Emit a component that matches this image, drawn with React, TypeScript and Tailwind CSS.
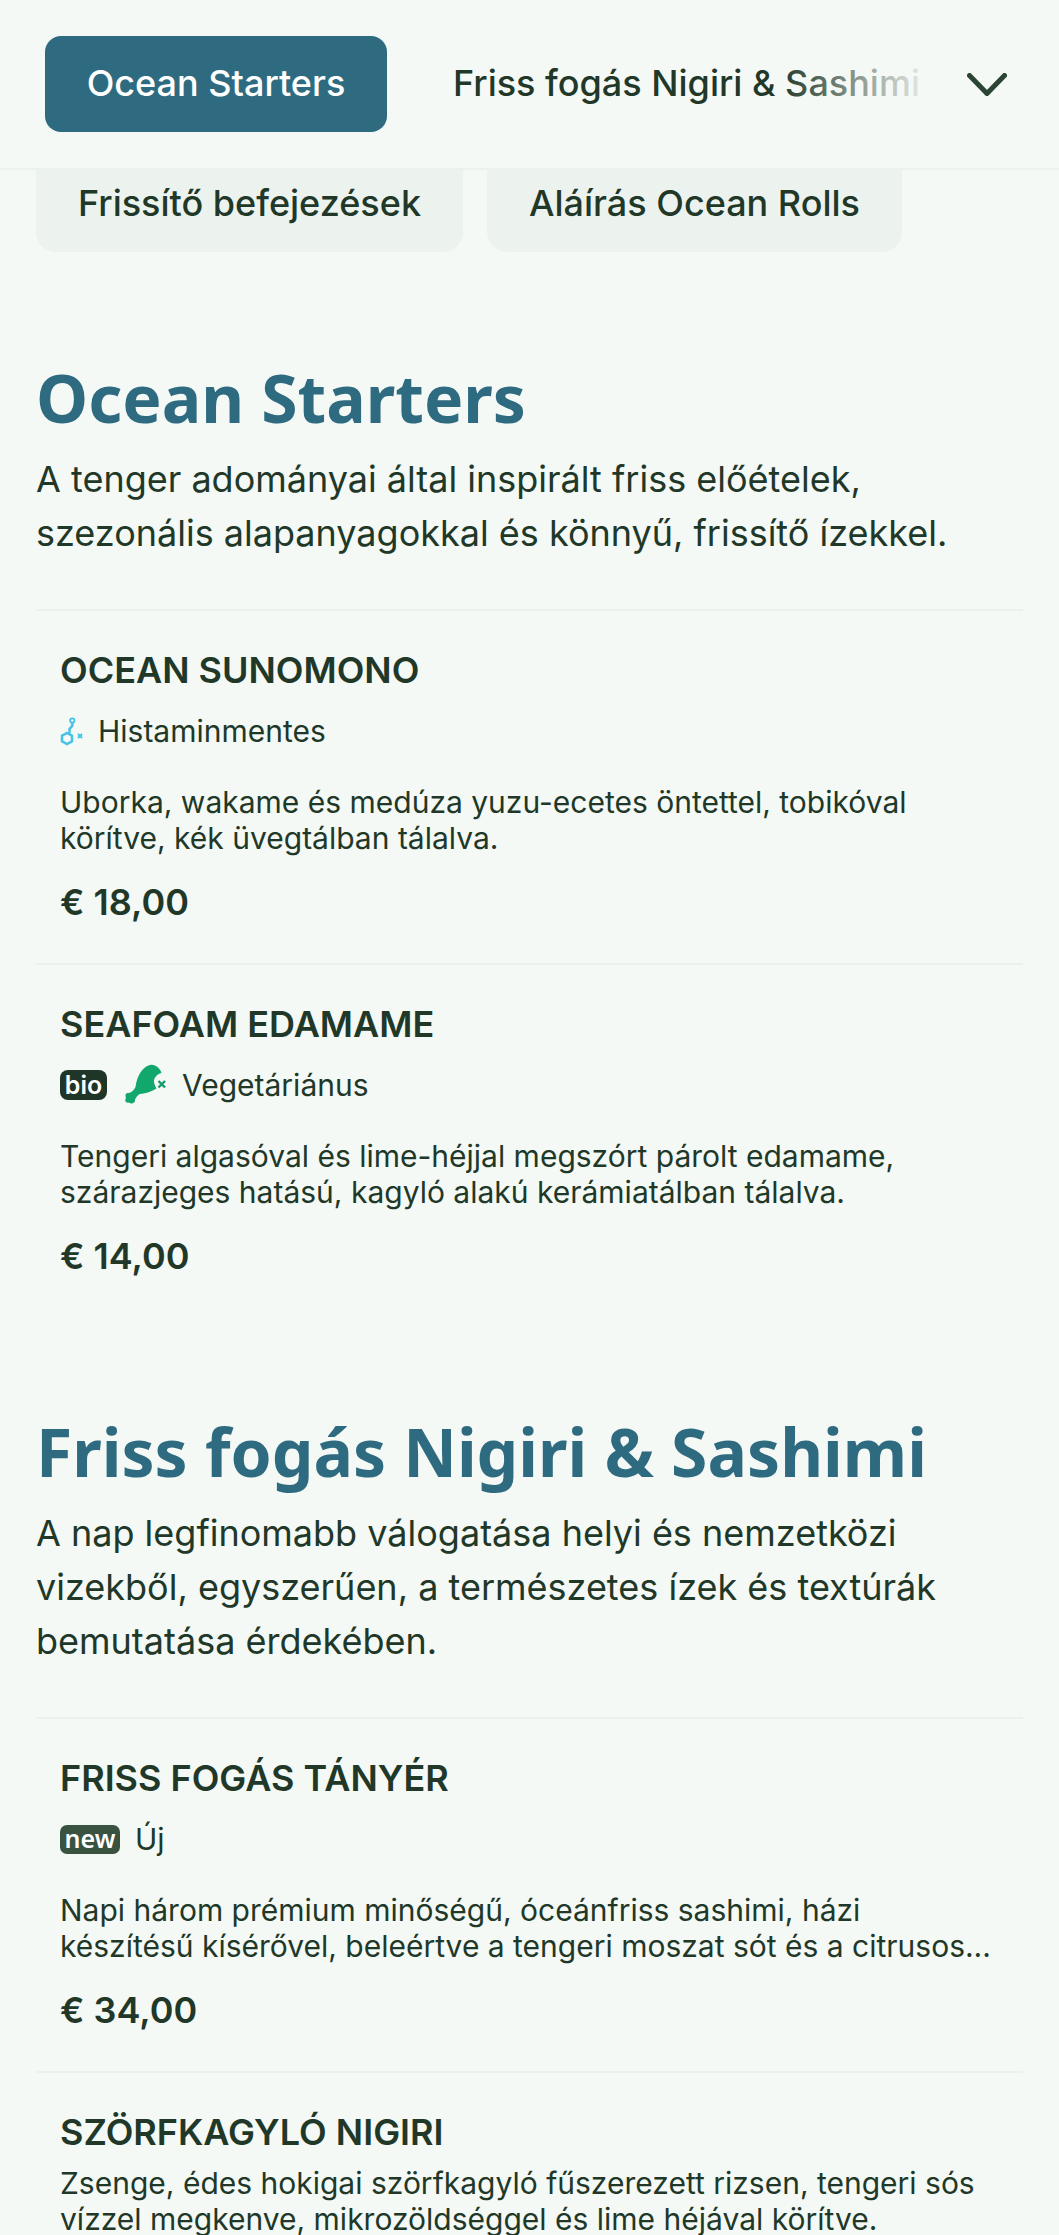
import React from "react";

const HistamineIcon = () => (
  <svg viewBox="0 0 36 36" className="w-[36px] h-[36px] shrink-0" fill="none" stroke="#45c2e6" strokeWidth="2.5">
    <path d="M12 20 L17 22.7 L17 28.3 L12 31 L7 28.3 L7 22.7 Z" />
    <path d="M14.5 21 L14.5 16 L17.3 12.7 L17.3 10" />
    <circle cx="17.3" cy="7.5" r="2.2" strokeWidth="1.8" />
    <path d="M23 21 L27 25 M27 21 L23 25" strokeWidth="1.9" />
  </svg>
);

const MeatIcon = () => (
  <svg viewBox="0 0 60 50" className="w-[60px] h-[50px] shrink-0">
    <path
      d="M16.5 27 C18 16 23 7 31 5 C36 3.8 41 8 42.5 13 C38 14 34.5 18 35 22 C35.5 25 36.5 27 37.5 28.5 C32 32 26 33.5 20.5 34 C18.5 35.5 17 37.5 16 39.5 C16.5 43.5 12 44.5 10 42.5 C7.5 43.5 5 41 7 38 C5.5 34 7.5 32.5 10 33 C12.5 32.5 15 30 16.5 27 Z"
      fill="#12a76c"
    />
    <path d="M39.5 21 L46 27.5 M46 21 L39.5 27.5" stroke="#169a6c" strokeWidth="2.4" fill="none" />
  </svg>
);

const Chevron = () => (
  <svg viewBox="0 0 40 23" className="w-[40px] h-[23px]" fill="none" stroke="#2b4535" strokeWidth="5" strokeLinecap="round" strokeLinejoin="round">
    <polyline points="2.5,2.5 20,20.5 37.5,2.5" />
  </svg>
);

const Section = ({ title, lines, children }: { title: string; lines: string[]; children: React.ReactNode }) => (
  <section>
    <h2 className="font-['Noto_Sans',sans-serif] font-bold text-[66px] leading-[76px] text-[#2f6b80]">{title}</h2>
    <p className="mt-[17px] text-[36px] leading-[54px]">
      {lines.map((l) => (
        <span key={l} className="block whitespace-nowrap">
          {l}
        </span>
      ))}
    </p>
    <div className="mt-[49px]">{children}</div>
  </section>
);

const Item = ({
  name,
  tags,
  desc,
  price,
}: {
  name: string;
  tags?: React.ReactNode;
  desc: string[];
  price?: string;
}) => (
  <article className="border-t-2 border-[#ebf1ed] px-[24px] pt-[38px] pb-[39px]">
    <h3 className="text-[36px] leading-[42px] font-semibold whitespace-nowrap">{name}</h3>
    {tags && <div className="mt-[20px] flex items-center h-[40px] text-[30px] leading-[40px]">{tags}</div>}
    <p className={`${tags ? "mt-[33px]" : "mt-[12px]"} text-[30px] leading-[36px]`}>
      {desc.map((l) => (
        <span key={l} className="block whitespace-nowrap">
          {l}
        </span>
      ))}
    </p>
    {price && <div className="mt-[24px] text-[36px] leading-[44px] font-semibold">{price}</div>}
  </article>
);

export default function App() {
  return (
    <div className="w-[1059px] h-[2235px] overflow-hidden bg-[#f4f9f5] text-[#213829] font-['Inter',sans-serif]">
      {/* Sticky category bar */}
      <header className="relative h-[170px] border-b-2 border-[#ebf1ed] bg-[#f5f9f6] flex items-center pl-[45px]">
        <div className="w-[342px] h-[96px] pb-[2px] rounded-[16px] bg-[#2f6b80] text-white text-[36px] font-medium flex items-center justify-center shrink-0">
          Ocean Starters
        </div>
        <div className="relative ml-[66px] w-[467px] pb-[2px] overflow-hidden whitespace-nowrap text-[36px] font-medium">
          Friss fogás Nigiri &amp; Sashimi
          <div className="absolute inset-y-0 right-0 w-[140px] bg-gradient-to-r from-[#f5f9f6]/0 to-[#f5f9f6]/90" />
        </div>
        <div className="ml-[47px]">
          <Chevron />
        </div>
      </header>

      {/* Rest of the category chips, scrolled under the bar */}
      <div className="flex gap-[24px] pl-[36px] text-[36px] font-medium">
        <div className="w-[427px] h-[82px] pb-[17px] rounded-b-[20px] bg-[#ecf3ef] flex items-center justify-center">
          Frissítő befejezések
        </div>
        <div className="w-[415px] h-[82px] pb-[17px] rounded-b-[20px] bg-[#ecf3ef] flex items-center justify-center">
          Aláírás Ocean Rolls
        </div>
      </div>

      <main className="pt-[107px] px-[36px]">
        <Section
          title="Ocean Starters"
          lines={[
            "A tenger adományai által inspirált friss előételek,",
            "szezonális alapanyagokkal és könnyű, frissítő ízekkel.",
          ]}
        >
          <Item
            name="OCEAN SUNOMONO"
            tags={
              <>
                <span className="-ml-[5px]">
                  <HistamineIcon />
                </span>
                <span className="ml-[7px]">Histaminmentes</span>
              </>
            }
            desc={[
              "Uborka, wakame és medúza yuzu-ecetes öntettel, tobikóval",
              "körítve, kék üvegtálban tálalva.",
            ]}
            price="€ 18,00"
          />
          <Item
            name="SEAFOAM EDAMAME"
            tags={
              <>
                <span className="w-[47px] h-[30px] rounded-[8px] bg-[#1f3527] text-white text-[25px] leading-[30px] font-semibold text-center">
                  bio
                </span>
                <span className="ml-[12px]">
                  <MeatIcon />
                </span>
                <span className="ml-[3px]">Vegetáriánus</span>
              </>
            }
            desc={[
              "Tengeri algasóval és lime-héjjal megszórt párolt edamame,",
              "szárazjeges hatású, kagyló alakú kerámiatálban tálalva.",
            ]}
            price="€ 14,00"
          />
        </Section>

        <div className="h-[96px]" />

        <Section
          title="Friss fogás Nigiri & Sashimi"
          lines={[
            "A nap legfinomabb válogatása helyi és nemzetközi",
            "vizekből, egyszerűen, a természetes ízek és textúrák",
            "bemutatása érdekében.",
          ]}
        >
          <Item
            name="FRISS FOGÁS TÁNYÉR"
            tags={
              <>
                <span className="w-[60px] h-[29px] rounded-[7px] bg-[#3a5240] text-white text-[25px] leading-[27px] font-semibold text-center font-['Noto_Sans',sans-serif]">
                  new
                </span>
                <span className="ml-[15px]">Új</span>
              </>
            }
            desc={[
              "Napi három prémium minőségű, óceánfriss sashimi, házi",
              "készítésű kísérővel, beleértve a tengeri moszat sót és a citrusos...",
            ]}
            price="€ 34,00"
          />
          <Item
            name="SZÖRFKAGYLÓ NIGIRI"
            desc={[
              "Zsenge, édes hokigai szörfkagyló fűszerezett rizsen, tengeri sós",
              "vízzel megkenve, mikrozöldséggel és lime héjával körítve.",
            ]}
          />
        </Section>
      </main>
    </div>
  );
}
